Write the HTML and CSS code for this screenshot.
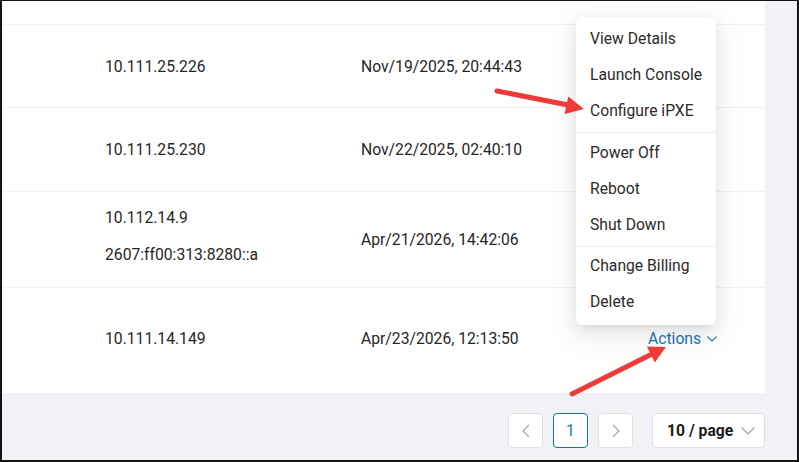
FILE: index.html
```html
<!DOCTYPE html>
<html>
<head>
  <meta charset="utf-8">
  <title>Servers</title>
  <link rel="stylesheet" href="styles.css">
</head>
<body>
  <div class="frame">
    <div class="card">
      <div class="row row-head"></div>
      <div class="row row-a">
        <div class="cell ip">10.111.25.226</div>
        <div class="cell">Nov/19/2025, 20:44:43</div>
        <div class="cell"></div>
      </div>
      <div class="row row-a">
        <div class="cell ip">10.111.25.230</div>
        <div class="cell">Nov/22/2025, 02:40:10</div>
        <div class="cell"></div>
      </div>
      <div class="row row-b">
        <div class="cell ip iplist">
          <div>10.112.14.9</div>
          <div>2607:ff00:313:8280::a</div>
        </div>
        <div class="cell">Apr/21/2026, 14:42:06</div>
        <div class="cell"></div>
      </div>
      <div class="row row-c">
        <div class="cell ip">10.111.14.149</div>
        <div class="cell">Apr/23/2026, 12:13:50</div>
        <div class="cell">
          <a class="actions">Actions
            <svg width="10" height="6" viewBox="0 0 10 6"><path d="M0.5 0.5 L5 5 L9.5 0.5" fill="none" stroke="#1976b9" stroke-width="1.1"/></svg>
          </a>
        </div>
      </div>
    </div>

    <div class="pager">
      <button class="pbtn">
        <svg width="8" height="14" viewBox="0 0 8 14"><path d="M7 1 L1 7 L7 13" fill="none" stroke="#a6a6a6" stroke-width="1.2"/></svg>
      </button>
      <button class="pbtn active">1</button>
      <button class="pbtn">
        <svg width="8" height="14" viewBox="0 0 8 14"><path d="M1 1 L7 7 L1 13" fill="none" stroke="#a6a6a6" stroke-width="1.2"/></svg>
      </button>
      <div class="psize">10 / page
        <svg width="14" height="8" viewBox="0 0 14 8"><path d="M0.5 0.5 L7 7 L13.5 0.5" fill="none" stroke="#9a9a9a" stroke-width="1.1"/></svg>
      </div>
    </div>
  </div>

  <ul class="menu">
    <li>View Details</li>
    <li>Launch Console</li>
    <li>Configure iPXE</li>
    <li class="sep"></li>
    <li>Power Off</li>
    <li>Reboot</li>
    <li>Shut Down</li>
    <li class="sep sep2"></li>
    <li>Change Billing</li>
    <li>Delete</li>
  </ul>

  <svg class="arrows" width="799" height="462" viewBox="0 0 799 462">
    <g stroke="#ef3a3a" stroke-width="5" stroke-linecap="round" fill="#ef3a3a">
      <line x1="497" y1="91" x2="568" y2="105"/>
      <polygon stroke="none" points="584,109 564.6,114.1 568.2,96.5"/>
      <line x1="572" y1="394" x2="650" y2="355"/>
      <polygon stroke="none" points="666,347 654.8,362.6 646.8,346.6"/>
    </g>
  </svg>
</body>
</html>
```

FILE: styles.css
```css
html {
  font-family: Roboto, "Liberation Sans", Arial, sans-serif;
}
body {
  margin: 0;
  position: relative;
  width: 799px;
  height: 462px;
  overflow: hidden;
}
.frame {
  box-sizing: border-box;
  width: 799px;
  height: 462px;
  border: 2px solid #141414;
  border-top-width: 1px;
  background-color: #f0f2f5;
}
.card {
  width: 763px;
  background-color: #fff;
  padding-bottom: 4px;
}
.row {
  display: grid;
  grid-template-columns: 103px 256px 287px auto;
  align-items: center;
  border-top: 1px solid #f0f0f0;
  font-size: 15.7px;
  color: #262626;
  box-sizing: border-box;
}
.row-head {
  border-top: none;
  height: 23px;
}
.row-a {
  height: 83px;
}
.row-b {
  height: 96px;
}
.row-c {
  height: 102px;
}
.row-a:nth-child(3) {
  height: 84px;
}
.ip {
  grid-column: 2;
}
.iplist {
  display: flex;
  flex-direction: column;
  gap: 15px;
  line-height: 22px;
  padding-bottom: 6px;
}
.actions {
  display: inline-flex;
  align-items: center;
  gap: 6px;
  color: #1976b9;
  font-size: 15.7px;
}
.pager {
  width: 763px;
  display: flex;
  justify-content: flex-end;
  align-items: center;
  padding-top: 20px;
}
.pbtn {
  box-sizing: border-box;
  width: 35px;
  height: 35px;
  margin-right: 10px;
  border: 1px solid #e0e0e0;
  border-radius: 4px;
  background-color: #fff;
  display: flex;
  align-items: center;
  justify-content: center;
  font-family: Roboto, "Liberation Sans", Arial, sans-serif;
  font-size: 15.7px;
  color: #1976b9;
  padding: 0;
}
.pbtn.active {
  border-color: #1b6fa6;
}
.pager .pbtn:nth-child(3) {
  margin-right: 19px;
}
.psize {
  box-sizing: border-box;
  width: 113px;
  height: 35px;
  border: 1px solid #e0e0e0;
  border-radius: 4px;
  background-color: #fff;
  display: flex;
  align-items: center;
  padding-left: 14px;
  gap: 8px;
  font-size: 15.7px;
  font-weight: bold;
  color: #1c1c1c;
}
.menu {
  position: absolute;
  left: 576px;
  top: 17px;
  width: 140px;
  margin: 0;
  padding: 4px 0 5px 0;
  list-style: none;
  background-color: #fff;
  border-radius: 6px;
  box-shadow: 0 6px 16px 0 rgba(0,0,0,.08), 0 3px 6px -4px rgba(0,0,0,.12), 0 9px 28px 8px rgba(0,0,0,.05);
}
.menu li {
  box-sizing: border-box;
  height: 36px;
  line-height: 34px;
  padding: 1px 0 0 14px;
  font-size: 15.7px;
  color: #2b2b2b;
}
.menu li.sep {
  height: 1px;
  padding: 0;
  margin: 3px 0 2px 0;
  background-color: #ececec;
}
.menu li.sep2 {
  margin: 3px 0 1px 0;
}
.arrows {
  position: absolute;
  left: 0;
  top: 0;
  pointer-events: none;
}
```
